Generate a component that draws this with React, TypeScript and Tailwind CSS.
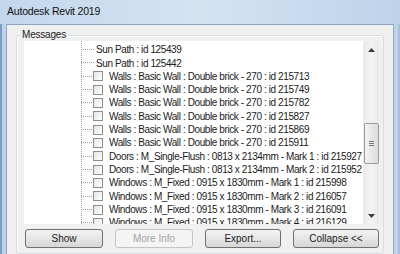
import React from "react";

type Row = { text: string; check: boolean };

const rows: Row[] = [
  { text: "Sun Path : id 125439", check: false },
  { text: "Sun Path : id 125442", check: false },
  { text: "Walls : Basic Wall : Double brick - 270 : id 215713", check: true },
  { text: "Walls : Basic Wall : Double brick - 270 : id 215749", check: true },
  { text: "Walls : Basic Wall : Double brick - 270 : id 215782", check: true },
  { text: "Walls : Basic Wall : Double brick - 270 : id 215827", check: true },
  { text: "Walls : Basic Wall : Double brick - 270 : id 215869", check: true },
  { text: "Walls : Basic Wall : Double brick - 270 : id 215911", check: true },
  { text: "Doors : M_Single-Flush : 0813 x 2134mm - Mark 1 : id 215927", check: true },
  { text: "Doors : M_Single-Flush : 0813 x 2134mm - Mark 2 : id 215952", check: true },
  { text: "Windows : M_Fixed : 0915 x 1830mm - Mark 1 : id 215998", check: true },
  { text: "Windows : M_Fixed : 0915 x 1830mm - Mark 2 : id 216057", check: true },
  { text: "Windows : M_Fixed : 0915 x 1830mm - Mark 3 : id 216091", check: true },
  { text: "Windows : M_Fixed : 0915 x 1830mm - Mark 4 : id 216129", check: true },
];

function TreeRow({ row }: { row: Row }) {
  return (
    <div className="flex h-[13.33px] shrink-0 items-center">
      {/* dotted branch from the tree line */}
      <div
        className={`h-0 shrink-0 border-t border-dotted border-[#a0a0a0] ${row.check ? "w-[11px]" : "w-[13px]"}`}
      />
      {row.check ? (
        <div className="ml-[1px] mr-[6px] h-[10px] w-[10px] shrink-0 border border-[#8f8f8f] bg-gradient-to-br from-[#e4e4e4] to-white" />
      ) : (
        <div className="w-[2px] shrink-0" />
      )}
      <span className="shrink-0 whitespace-nowrap">{row.text}</span>
    </div>
  );
}

function Button({ label, w, disabled }: { label: string; w: string; disabled?: boolean }) {
  return (
    <div
      className={`flex h-[19px] items-center justify-center rounded-[3px] border ${w} ${
        disabled
          ? "border-[#c5c5c5] bg-[#f4f4f4] text-[#a3a3a3]"
          : "border-[#707070] bg-gradient-to-b from-[#f3f3f3] via-[#e6e6e6] to-[#d6d6d6] text-[#1b1b1b]"
      }`}
    >
      {label}
    </div>
  );
}

export default function App() {
  return (
    <div
      className="h-[254px] w-[400px] overflow-hidden bg-[#bcd3eb] text-[10px]"
      style={{ fontFamily: '"Liberation Sans", Arial, sans-serif' }}
    >
      {/* title bar */}
      <div className="flex h-[24px] items-center bg-gradient-to-r from-[#c3d7ec] via-[#d4e3f2] to-[#bed3ea] pl-[7px] text-[10.5px] tracking-[-0.2px] text-[#111]">
        Autodesk Revit 2019
      </div>
      <div className="flex h-[230px] border-l-2 border-r-2 border-l-[#7e9cc0] border-r-[#a9c0da]">
        <div className="w-[4px] bg-[#bcd3eb]" />
        {/* dialog body */}
        <div className="flex h-full w-[388px] flex-col border-l border-t border-r border-[#8da5bf] bg-[#f0f0f0] pl-[9px] pr-[9px] pt-[4px]">
          {/* group box */}
          <div className="relative mt-[6px] h-[260px] rounded-[3px] border border-[#d5dfe5] shadow-[inset_1px_1px_0_#fff]">
            <div className="absolute -top-[7px] left-[3px] bg-[#f0f0f0] px-[2px] leading-[12px] tracking-[-0.2px] text-[#1b1b1b]">
              Messages
            </div>
            <div className="ml-[7px] mr-[4px] mt-[5px] flex h-[183px]">
              {/* tree list */}
              <div className="relative flex-1 overflow-hidden bg-white tracking-[-0.4px] text-[#1b1b1b]">
                <div className="absolute bottom-0 left-[57px] top-0 border-l border-dotted border-[#a0a0a0]" />
                <div className="flex flex-col pl-[57px] pt-[2px]">
                  {rows.map((r, i) => (
                    <TreeRow key={i} row={r} />
                  ))}
                </div>
              </div>
              {/* scrollbar */}
              <div className="flex w-[16px] flex-col items-center bg-gradient-to-r from-[#e8e8e8] via-[#f4f4f4] to-[#e8e8e8]">
                <div className="flex h-[17px] items-center justify-center">
                  <svg width="7" height="4" viewBox="0 0 7 4">
                    <path d="M0 4 L3.5 0 L7 4 Z" fill="#3b3b3b" />
                  </svg>
                </div>
                <div className="mt-[65px] flex h-[41px] w-[15px] items-center justify-center rounded-[2px] border border-[#9a9a9a] bg-gradient-to-r from-[#f3f3f3] to-[#dcdcdc]">
                  <div className="flex flex-col gap-[1px]">
                    <div className="h-px w-[5px] bg-[#777]" />
                    <div className="h-px w-[5px] bg-[#777]" />
                    <div className="h-px w-[5px] bg-[#777]" />
                  </div>
                </div>
                <div className="flex-1" />
                <div className="flex h-[17px] items-center justify-center">
                  <svg width="7" height="4" viewBox="0 0 7 4">
                    <path d="M0 0 L7 0 L3.5 4 Z" fill="#3b3b3b" />
                  </svg>
                </div>
              </div>
            </div>
            {/* buttons */}
            <div className="ml-[8px] mt-[5px] flex gap-[12px]">
              <Button label="Show" w="w-[78px]" />
              <Button label="More Info" w="w-[78px]" disabled />
              <Button label="Export..." w="w-[76px]" />
              <Button label="Collapse <<" w="w-[86px]" />
            </div>
          </div>
        </div>
      </div>
    </div>
  );
}
